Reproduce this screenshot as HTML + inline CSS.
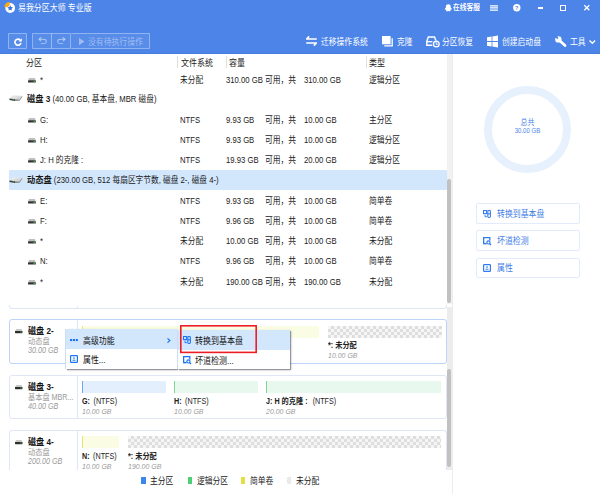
<!DOCTYPE html>
<html lang="zh-CN"><head><meta charset="utf-8"><title>易我分区大师 专业版</title>
<style>
html,body{margin:0;padding:0;}
body{width:600px;height:494px;position:relative;overflow:hidden;background:#fff;font-family:"Liberation Sans","Noto Sans CJK SC",sans-serif;}
.t{position:absolute;white-space:nowrap;line-height:12px;height:12px;transform-origin:0 50%;}
.b{position:absolute;box-sizing:border-box;}
.i{font-style:italic;}
.bd{font-weight:bold;}
svg{position:absolute;overflow:visible;}
.ck{background-color:#fff;background-color:#f6f6f6;background-image:linear-gradient(45deg,#dedede 25%,transparent 25%,transparent 75%,#dedede 75%),linear-gradient(45deg,#dedede 25%,transparent 25%,transparent 75%,#dedede 75%);background-size:6px 6px;background-position:0 0,3px 3px;}
</style></head><body>

<div class="b" style="left:0px;top:0px;width:600px;height:54px;background:#4c84e8;border-bottom:1px solid #457cde;"></div>
<svg style="left:4px;top:2px" width="12" height="12" viewBox="0 0 12 12"><circle cx="6.200" cy="6" r="4.900" fill="#fff"/><path d="M0.300 5A5.700 5.700 0 0 1 5.800 0.100L5.700 3.300L3.300 5.300Z" fill="#f7a81b"/><path d="M6.200 3.300l.85 1.750 1.950.25-1.400 1.350.35 1.900L6.200 7.650 4.450 8.550l.35-1.900L3.400 5.300l1.950-.25z" fill="#3b74dc"/></svg>
<div class="t " style="left:17.5px;top:2.2px;font-size:9.03px;color:#fff;transform:scaleX(0.88);">易我分区大师 专业版</div>
<svg style="left:444.300px;top:4px" width="8.600" height="7.500" viewBox="0 0 9 10" preserveAspectRatio="none"><path d="M4.500 0.300C2.900 0.300 2 1.500 2 3v1.600C1.300 5.500 0.600 6.600 0.800 7.600c.3.300.8-.3 1-.6.100.6.400 1 .8 1.400-.4.200-.7.400-.6.800.2.500 1.600.4 2.500.1.900.3 2.300.4 2.500-.1.100-.4-.2-.6-.6-.8.400-.4.700-.8.800-1.400.2.300.7.900 1 .6.200-1-.5-2.100-1.200-3V3c0-1.500-.9-2.700-2.500-2.700z" fill="#fff"/></svg>
<div class="t " style="left:453.2px;top:2.4px;font-size:7.67px;color:#fff;transform:scaleX(0.88);text-shadow:0 0 .4px #fff;">在线客服</div>
<svg style="left:490px;top:5px" width="8" height="6" viewBox="0 0 8 6"><path d="M0 .75h8M0 2.950h8M0 5.150h8" stroke="#fff" stroke-width="1.250"/></svg>
<svg style="left:513.300px;top:3.700px" width="7.600" height="7.600" viewBox="0 0 8 8"><circle cx="4" cy="4" r="3.900" fill="#fff"/><text x="4" y="6.100" font-size="5.800" font-weight="bold" text-anchor="middle" fill="#4c84e8" font-family="Liberation Sans,sans-serif">?</text></svg>
<div class="b" style="left:537.5px;top:7px;width:5.6px;height:1.7px;background:#fff;"></div>
<div class="b" style="left:560.4px;top:5px;width:5.9px;height:5.7px;border:1.600px solid #fff;"></div>
<svg style="left:583.700px;top:5px" width="5.600" height="5.600" viewBox="0 0 6 6"><path d="M.3 .3l5.400 5.400M5.700 .3L.3 5.700" stroke="#fff" stroke-width="1.400"/></svg>
<div class="b" style="left:8px;top:33px;width:19px;height:16px;border:1px solid rgba(255,255,255,.34);background:rgba(255,255,255,.07);border-radius:1px;"></div>
<svg style="left:13.800px;top:37.500px" width="8" height="8" viewBox="0 0 8 8"><path d="M6.300 2.300A3 3 0 1 0 6.900 4.800" fill="none" stroke="#fff" stroke-width="1.700"/><path d="M7.800 0.300v3.200H4.600z" fill="#fff"/></svg>
<div class="b" style="left:32px;top:33px;width:20px;height:16px;border:1px solid rgba(255,255,255,.34);border-right:none;background:rgba(255,255,255,.07);border-radius:1px;"></div>
<div class="b" style="left:51px;top:33px;width:20px;height:16px;border:1px solid rgba(255,255,255,.34);background:rgba(255,255,255,.07);border-radius:1px;"></div>
<div class="b" style="left:71px;top:33px;width:79px;height:16px;border:1px solid rgba(255,255,255,.34);border-left:none;background:rgba(255,255,255,.07);border-radius:1px;"></div>
<svg style="left:37.500px;top:37.300px" width="9" height="7" viewBox="0 0 9 7"><path d="M1.200 2.300h5a2.100 2.100 0 0 1 0 4.200H3" fill="none" stroke="rgba(255,255,255,.42)" stroke-width="1.200"/><path d="M3.200 .3L1 2.300l2.200 2" fill="none" stroke="rgba(255,255,255,.42)" stroke-width="1.200"/></svg>
<svg style="left:56.500px;top:37.300px" width="9" height="7" viewBox="0 0 9 7"><path d="M7.800 2.300h-5a2.100 2.100 0 0 0 0 4.200H6" fill="none" stroke="rgba(255,255,255,.42)" stroke-width="1.200"/><path d="M5.800 .3L8 2.300l-2.200 2" fill="none" stroke="rgba(255,255,255,.42)" stroke-width="1.200"/></svg>
<svg style="left:79px;top:37.700px" width="5.500" height="7.200" viewBox="0 0 5.500 7.200"><path d="M0 0l5.500 3.600-5.500 3.600z" fill="rgba(255,255,255,.42)"/></svg>
<div class="t " style="left:88px;top:35.5px;font-size:8.92px;color:rgba(255,255,255,.42);transform:scaleX(0.88);">没有待执行操作</div>
<svg style="left:306.300px;top:36.300px" width="11" height="10" viewBox="0 0 11 10"><path d="M0 3h10.800M3.200 .3L.5 3M.2 7h10.800M7.800 9.700L10.500 7" fill="none" stroke="#fff" stroke-width="1.650"/></svg>
<div class="t " style="left:321px;top:35.5px;font-size:8.86px;color:#fff;transform:scaleX(0.88);">迁移操作系统</div>
<svg style="left:382.300px;top:36.200px" width="11" height="10.500" viewBox="0 0 11 10.500"><path d="M0 0h8.600v8.300H0z" fill="#fff"/><path d="M10.200 2.300v7.500H2.300" fill="none" stroke="#fff" stroke-width="1.300"/></svg>
<div class="t " style="left:397px;top:35.5px;font-size:8.86px;color:#fff;transform:scaleX(0.88);">克隆</div>
<svg style="left:425.500px;top:36px" width="14" height="11.500" viewBox="0 0 14 11.500"><path d="M6.300 9.200H0.800V5.700L2.300 0.900H8.500L9.900 4.400" fill="none" stroke="#fff" stroke-width="1.450"/><path d="M.8 5.700h5.600" stroke="#fff" stroke-width="1.300"/><circle cx="10.300" cy="8.100" r="2.850" fill="none" stroke="#fff" stroke-width="1.300"/><path d="M10.200 6.500v1.800h1.500" fill="none" stroke="#fff" stroke-width="1"/></svg>
<div class="t " style="left:442px;top:35.5px;font-size:8.86px;color:#fff;transform:scaleX(0.88);">分区恢复</div>
<svg style="left:487px;top:36px" width="11" height="11" viewBox="0 0 11 11"><path d="M0 1.200L4.600.5v4.600H0zM5.400.4L11 -.4v5.500H5.400zM0 5.900h4.600v4.600L0 9.800zM5.400 5.900H11v5.500l-5.600-.8z" fill="#fff"/></svg>
<div class="t " style="left:502px;top:35.5px;font-size:8.86px;color:#fff;transform:scaleX(0.88);">创建启动盘</div>
<svg style="left:555px;top:36.200px" width="12" height="11" viewBox="0 0 12 11"><circle cx="3.400" cy="3.400" r="3.200" fill="#fff"/><path d="M3.400 3.400L-0.500 1.300L1.600 -0.800Z" fill="#4c84e8"/><path d="M2 2.100L0 0.100L1.500-.5L3.600 1.600Z" fill="#4c84e8"/><path d="M4.800 4.800L10 9.500" stroke="#fff" stroke-width="2.700" stroke-linecap="round"/></svg>
<div class="t " style="left:570px;top:35.5px;font-size:8.86px;color:#fff;transform:scaleX(0.88);">工具</div>
<svg style="left:589.200px;top:39.800px" width="6.600" height="4.200" viewBox="0 0 6.600 4.200"><path d="M.5.500L3.300 3.300l2.800-2.800" fill="none" stroke="#fff" stroke-width="1.400"/></svg>
<div class="t " style="left:26px;top:57.4px;font-size:9.09px;color:#222;transform:scaleX(0.88);">分区</div>
<div class="b" style="left:177px;top:56px;width:1px;height:12px;background:#e0e0e0;"></div>
<div class="b" style="left:226px;top:56px;width:1px;height:12px;background:#e0e0e0;"></div>
<div class="b" style="left:366px;top:56px;width:1px;height:12px;background:#e0e0e0;"></div>
<div class="t " style="left:180.5px;top:57.4px;font-size:9.09px;color:#222;transform:scaleX(0.88);">文件系统</div>
<div class="t " style="left:229px;top:57.4px;font-size:9.09px;color:#222;transform:scaleX(0.88);">容量</div>
<div class="t " style="left:369px;top:57.4px;font-size:9.09px;color:#222;transform:scaleX(0.88);">类型</div>
<div class="b" style="left:9px;top:170px;width:438px;height:20px;background:#d2e6fc;"></div>
<svg style="left:28px;top:77.9px" width="7.800" height="4.700" viewBox="0 0 8 5" preserveAspectRatio="none"><path d="M1 0h6L8 2.600H0z" fill="#bebebe"/><rect x="0" y="2.500" width="8" height="2.400" rx=".5" fill="#333"/><rect x="5.700" y="3.100" width="1.400" height="1" fill="#3fd04f"/></svg>
<div class="t " style="left:40px;top:73.5px;font-size:8.75px;color:#1a1a1a;transform:scaleX(0.88);">*</div>
<div class="t " style="left:179.5px;top:73.5px;font-size:8.75px;color:#1a1a1a;transform:scaleX(0.88);">未分配</div>
<div class="t " style="left:226px;top:73.5px;font-size:8.75px;color:#1a1a1a;transform:scaleX(0.88);">310.00 GB</div>
<div class="t " style="left:265px;top:73.5px;font-size:8.86px;color:#1a1a1a;transform:scaleX(0.88);">可用，共</div>
<div class="t " style="left:303.5px;top:73.5px;font-size:8.75px;color:#1a1a1a;transform:scaleX(0.88);">310.00 GB</div>
<div class="t " style="left:369px;top:73.5px;font-size:8.86px;color:#1a1a1a;transform:scaleX(0.88);">逻辑分区</div>
<svg style="left:28px;top:118.10000000000001px" width="7.800" height="4.700" viewBox="0 0 8 5" preserveAspectRatio="none"><path d="M1 0h6L8 2.600H0z" fill="#bebebe"/><rect x="0" y="2.500" width="8" height="2.400" rx=".5" fill="#333"/><rect x="5.700" y="3.100" width="1.400" height="1" fill="#3fd04f"/></svg>
<div class="t " style="left:40px;top:113.7px;font-size:8.75px;color:#1a1a1a;transform:scaleX(0.88);">G:</div>
<div class="t " style="left:179.5px;top:113.7px;font-size:8.75px;color:#1a1a1a;transform:scaleX(0.88);">NTFS</div>
<div class="t " style="left:226px;top:113.7px;font-size:8.75px;color:#1a1a1a;transform:scaleX(0.88);">9.93 GB</div>
<div class="t " style="left:265px;top:113.7px;font-size:8.86px;color:#1a1a1a;transform:scaleX(0.88);">可用，共</div>
<div class="t " style="left:303.5px;top:113.7px;font-size:8.75px;color:#1a1a1a;transform:scaleX(0.88);">10.00 GB</div>
<div class="t " style="left:369px;top:113.7px;font-size:8.86px;color:#1a1a1a;transform:scaleX(0.88);">主分区</div>
<svg style="left:28px;top:138.20000000000002px" width="7.800" height="4.700" viewBox="0 0 8 5" preserveAspectRatio="none"><path d="M1 0h6L8 2.600H0z" fill="#bebebe"/><rect x="0" y="2.500" width="8" height="2.400" rx=".5" fill="#333"/><rect x="5.700" y="3.100" width="1.400" height="1" fill="#3fd04f"/></svg>
<div class="t " style="left:40px;top:133.8px;font-size:8.75px;color:#1a1a1a;transform:scaleX(0.88);">H:</div>
<div class="t " style="left:179.5px;top:133.8px;font-size:8.75px;color:#1a1a1a;transform:scaleX(0.88);">NTFS</div>
<div class="t " style="left:226px;top:133.8px;font-size:8.75px;color:#1a1a1a;transform:scaleX(0.88);">9.93 GB</div>
<div class="t " style="left:265px;top:133.8px;font-size:8.86px;color:#1a1a1a;transform:scaleX(0.88);">可用，共</div>
<div class="t " style="left:303.5px;top:133.8px;font-size:8.75px;color:#1a1a1a;transform:scaleX(0.88);">10.00 GB</div>
<div class="t " style="left:369px;top:133.8px;font-size:8.86px;color:#1a1a1a;transform:scaleX(0.88);">逻辑分区</div>
<svg style="left:28px;top:158.4px" width="7.800" height="4.700" viewBox="0 0 8 5" preserveAspectRatio="none"><path d="M1 0h6L8 2.600H0z" fill="#bebebe"/><rect x="0" y="2.500" width="8" height="2.400" rx=".5" fill="#333"/><rect x="5.700" y="3.100" width="1.400" height="1" fill="#3fd04f"/></svg>
<div class="t " style="left:40px;top:154.0px;font-size:8.75px;color:#1a1a1a;transform:scaleX(0.88);">J: H 的克隆 :</div>
<div class="t " style="left:179.5px;top:154.0px;font-size:8.75px;color:#1a1a1a;transform:scaleX(0.88);">NTFS</div>
<div class="t " style="left:226px;top:154.0px;font-size:8.75px;color:#1a1a1a;transform:scaleX(0.88);">19.93 GB</div>
<div class="t " style="left:265px;top:154.0px;font-size:8.86px;color:#1a1a1a;transform:scaleX(0.88);">可用，共</div>
<div class="t " style="left:303.5px;top:154.0px;font-size:8.75px;color:#1a1a1a;transform:scaleX(0.88);">20.00 GB</div>
<div class="t " style="left:369px;top:154.0px;font-size:8.86px;color:#1a1a1a;transform:scaleX(0.88);">逻辑分区</div>
<svg style="left:28px;top:198.9px" width="7.800" height="4.700" viewBox="0 0 8 5" preserveAspectRatio="none"><path d="M1 0h6L8 2.600H0z" fill="#bebebe"/><rect x="0" y="2.500" width="8" height="2.400" rx=".5" fill="#333"/><rect x="5.700" y="3.100" width="1.400" height="1" fill="#3fd04f"/></svg>
<div class="t " style="left:40px;top:194.5px;font-size:8.75px;color:#1a1a1a;transform:scaleX(0.88);">E:</div>
<div class="t " style="left:179.5px;top:194.5px;font-size:8.75px;color:#1a1a1a;transform:scaleX(0.88);">NTFS</div>
<div class="t " style="left:226px;top:194.5px;font-size:8.75px;color:#1a1a1a;transform:scaleX(0.88);">9.93 GB</div>
<div class="t " style="left:265px;top:194.5px;font-size:8.86px;color:#1a1a1a;transform:scaleX(0.88);">可用，共</div>
<div class="t " style="left:303.5px;top:194.5px;font-size:8.75px;color:#1a1a1a;transform:scaleX(0.88);">10.00 GB</div>
<div class="t " style="left:369px;top:194.5px;font-size:8.86px;color:#1a1a1a;transform:scaleX(0.88);">简单卷</div>
<svg style="left:28px;top:219.1px" width="7.800" height="4.700" viewBox="0 0 8 5" preserveAspectRatio="none"><path d="M1 0h6L8 2.600H0z" fill="#bebebe"/><rect x="0" y="2.500" width="8" height="2.400" rx=".5" fill="#333"/><rect x="5.700" y="3.100" width="1.400" height="1" fill="#3fd04f"/></svg>
<div class="t " style="left:40px;top:214.7px;font-size:8.75px;color:#1a1a1a;transform:scaleX(0.88);">F:</div>
<div class="t " style="left:179.5px;top:214.7px;font-size:8.75px;color:#1a1a1a;transform:scaleX(0.88);">NTFS</div>
<div class="t " style="left:226px;top:214.7px;font-size:8.75px;color:#1a1a1a;transform:scaleX(0.88);">9.96 GB</div>
<div class="t " style="left:265px;top:214.7px;font-size:8.86px;color:#1a1a1a;transform:scaleX(0.88);">可用，共</div>
<div class="t " style="left:303.5px;top:214.7px;font-size:8.75px;color:#1a1a1a;transform:scaleX(0.88);">10.00 GB</div>
<div class="t " style="left:369px;top:214.7px;font-size:8.86px;color:#1a1a1a;transform:scaleX(0.88);">简单卷</div>
<svg style="left:28px;top:239.4px" width="7.800" height="4.700" viewBox="0 0 8 5" preserveAspectRatio="none"><path d="M1 0h6L8 2.600H0z" fill="#bebebe"/><rect x="0" y="2.500" width="8" height="2.400" rx=".5" fill="#333"/><rect x="5.700" y="3.100" width="1.400" height="1" fill="#3fd04f"/></svg>
<div class="t " style="left:40px;top:235.0px;font-size:8.75px;color:#1a1a1a;transform:scaleX(0.88);">*</div>
<div class="t " style="left:179.5px;top:235.0px;font-size:8.75px;color:#1a1a1a;transform:scaleX(0.88);">未分配</div>
<div class="t " style="left:226px;top:235.0px;font-size:8.75px;color:#1a1a1a;transform:scaleX(0.88);">10.00 GB</div>
<div class="t " style="left:265px;top:235.0px;font-size:8.86px;color:#1a1a1a;transform:scaleX(0.88);">可用，共</div>
<div class="t " style="left:303.5px;top:235.0px;font-size:8.75px;color:#1a1a1a;transform:scaleX(0.88);">10.00 GB</div>
<div class="t " style="left:369px;top:235.0px;font-size:8.86px;color:#1a1a1a;transform:scaleX(0.88);">未分配</div>
<svg style="left:28px;top:259.59999999999997px" width="7.800" height="4.700" viewBox="0 0 8 5" preserveAspectRatio="none"><path d="M1 0h6L8 2.600H0z" fill="#bebebe"/><rect x="0" y="2.500" width="8" height="2.400" rx=".5" fill="#333"/><rect x="5.700" y="3.100" width="1.400" height="1" fill="#3fd04f"/></svg>
<div class="t " style="left:40px;top:255.2px;font-size:8.75px;color:#1a1a1a;transform:scaleX(0.88);">N:</div>
<div class="t " style="left:179.5px;top:255.2px;font-size:8.75px;color:#1a1a1a;transform:scaleX(0.88);">NTFS</div>
<div class="t " style="left:226px;top:255.2px;font-size:8.75px;color:#1a1a1a;transform:scaleX(0.88);">9.96 GB</div>
<div class="t " style="left:265px;top:255.2px;font-size:8.86px;color:#1a1a1a;transform:scaleX(0.88);">可用，共</div>
<div class="t " style="left:303.5px;top:255.2px;font-size:8.75px;color:#1a1a1a;transform:scaleX(0.88);">10.00 GB</div>
<div class="t " style="left:369px;top:255.2px;font-size:8.86px;color:#1a1a1a;transform:scaleX(0.88);">简单卷</div>
<svg style="left:28px;top:279.9px" width="7.800" height="4.700" viewBox="0 0 8 5" preserveAspectRatio="none"><path d="M1 0h6L8 2.600H0z" fill="#bebebe"/><rect x="0" y="2.500" width="8" height="2.400" rx=".5" fill="#333"/><rect x="5.700" y="3.100" width="1.400" height="1" fill="#3fd04f"/></svg>
<div class="t " style="left:40px;top:275.5px;font-size:8.75px;color:#1a1a1a;transform:scaleX(0.88);">*</div>
<div class="t " style="left:179.5px;top:275.5px;font-size:8.75px;color:#1a1a1a;transform:scaleX(0.88);">未分配</div>
<div class="t " style="left:226px;top:275.5px;font-size:8.75px;color:#1a1a1a;transform:scaleX(0.88);">190.00 GB</div>
<div class="t " style="left:265px;top:275.5px;font-size:8.86px;color:#1a1a1a;transform:scaleX(0.88);">可用，共</div>
<div class="t " style="left:303.5px;top:275.5px;font-size:8.75px;color:#1a1a1a;transform:scaleX(0.88);">190.00 GB</div>
<div class="t " style="left:369px;top:275.5px;font-size:8.86px;color:#1a1a1a;transform:scaleX(0.88);">未分配</div>
<svg style="left:9px;top:95.2px" width="14" height="7" viewBox="0 0 14 7"><defs><linearGradient id="dg98" x1="0" y1="0" x2="1" y2="1"><stop offset="0" stop-color="#f4f4f4"/><stop offset="1" stop-color="#c9c9c9"/></linearGradient></defs><path d="M3.500 0.300L13.200 0.800L10.500 4.500L0.500 3.600z" fill="url(#dg98)"/><path d="M0.500 3.600L6 4.300V6L0.500 4.900z" fill="#3a3a3a"/><path d="M6 4.300L10.500 4.500L13.200 0.800V2L10.600 5.800L6 6z" fill="#8a8a8a"/><rect x="3.600" y="4.500" width="1.400" height=".7" fill="#3fd04f"/></svg>
<div class="t " style="left:26.5px;top:92.5px;font-size:8.75px;color:#1a1a1a;transform:scaleX(0.88);"><b style="font-size:107%">磁盘 3</b> (40.00 GB, 基本盘, MBR 磁盘)</div>
<svg style="left:9px;top:176.5px" width="14" height="7" viewBox="0 0 14 7"><defs><linearGradient id="dg180" x1="0" y1="0" x2="1" y2="1"><stop offset="0" stop-color="#f4f4f4"/><stop offset="1" stop-color="#c9c9c9"/></linearGradient></defs><path d="M3.500 0.300L13.200 0.800L10.500 4.500L0.500 3.600z" fill="url(#dg180)"/><path d="M0.500 3.600L6 4.300V6L0.500 4.900z" fill="#3a3a3a"/><path d="M6 4.300L10.500 4.500L13.200 0.800V2L10.600 5.800L6 6z" fill="#8a8a8a"/><rect x="3.600" y="4.500" width="1.400" height=".7" fill="#3fd04f"/></svg>
<div class="t " style="left:26.5px;top:173.5px;font-size:8.75px;color:#1a1a1a;transform:scaleX(0.88);"><b style="font-size:107%">动态盘</b> (230.00 GB, 512 每扇区字节数, 磁盘 2-, 磁盘 4-)</div>
<div class="b" style="left:447px;top:54px;width:5.5px;height:250px;background:#f1f1f1;"></div>
<div class="b" style="left:447px;top:307px;width:5.5px;height:163px;background:#ececec;"></div>
<div class="b" style="left:447.2px;top:178.5px;width:4.3px;height:124px;background:#c1c1c1;border-radius:2.200px;"></div>
<div class="b" style="left:447.2px;top:369px;width:4.3px;height:98.2px;background:#c1c1c1;border-radius:2.200px;"></div>
<div class="b" style="left:452px;top:54px;width:1px;height:440px;background:#ededed;"></div>
<div class="b" style="left:9px;top:305px;width:437.5px;height:3.7px;border:1px solid #dfe7f5;border-top:none;border-radius:0 0 3px 3px;"></div>
<div class="b" style="left:77px;top:306px;width:1px;height:2px;background:#dfe7f5;"></div>
<div class="b" style="left:9px;top:319px;width:437.5px;height:45px;border:1px solid #bcd4f8;border-radius:3px;background:#fff;"></div>
<div class="b" style="left:77px;top:320px;width:1px;height:43px;background:#dfe7f5;"></div>
<svg style="left:14.5px;top:329.1px" width="7.500" height="4.400" viewBox="0 0 8 5" preserveAspectRatio="none"><path d="M1.100 0h5.800L8 2.500H0z" fill="#c9c9c9"/><rect x="0" y="2.200" width="8" height="2.600" rx=".5" fill="#2e2e2e"/><rect x="5.700" y="3" width="1.400" height="1" fill="#3fd04f"/></svg>
<div class="t " style="left:28px;top:324.5px;font-size:9.2px;color:#111;transform:scaleX(0.88);font-weight:bold;">磁盘 2-</div>
<div class="t " style="left:28px;top:335.5px;font-size:8.18px;color:#9a9a9a;transform:scaleX(0.88);">动态盘</div>
<div class="t " style="left:28px;top:344.8px;font-size:8.18px;color:#9a9a9a;transform:scaleX(0.88);font-style:italic;">30.00 GB</div>
<div class="b" style="left:82px;top:326px;width:237.3px;height:12px;background:#fbfce4;border-left:1px solid #e6e76a;"></div>
<div class="b ck" style="left:328px;top:326px;width:113.5px;height:12px;"></div>
<div class="t " style="left:328px;top:340.0px;font-size:8.18px;color:#222;transform:scaleX(0.88);"><b>*: 未分配</b></div>
<div class="t " style="left:328px;top:350.0px;font-size:7.95px;color:#9a9a9a;transform:scaleX(0.88);font-style:italic;">10.00 GB</div>
<div class="b" style="left:9px;top:375px;width:437.5px;height:44px;border:1px solid #dfe7f5;border-radius:3px;background:#fff;"></div>
<div class="b" style="left:77px;top:376px;width:1px;height:42px;background:#dfe7f5;"></div>
<svg style="left:14.5px;top:385.1px" width="7.500" height="4.400" viewBox="0 0 8 5" preserveAspectRatio="none"><path d="M1.100 0h5.800L8 2.500H0z" fill="#c9c9c9"/><rect x="0" y="2.200" width="8" height="2.600" rx=".5" fill="#2e2e2e"/><rect x="5.700" y="3" width="1.400" height="1" fill="#3fd04f"/></svg>
<div class="t " style="left:28px;top:380.5px;font-size:9.2px;color:#111;transform:scaleX(0.88);font-weight:bold;">磁盘 3-</div>
<div class="t " style="left:28px;top:391.5px;font-size:8.18px;color:#9a9a9a;transform:scaleX(0.88);">基本盘 MBR...</div>
<div class="t " style="left:28px;top:400.8px;font-size:8.18px;color:#9a9a9a;transform:scaleX(0.88);font-style:italic;">40.00 GB</div>
<div class="b" style="left:82px;top:381px;width:83.5px;height:12px;background:#e4effd;border-left:1px solid #6ea6f3;"></div>
<div class="t " style="left:82px;top:396.0px;font-size:8.18px;color:#222;transform:scaleX(0.88);"><b>G:</b> <span style="margin-left:1.700px">(NTFS)</span></div>
<div class="t " style="left:82px;top:406.0px;font-size:7.95px;color:#9a9a9a;transform:scaleX(0.88);font-style:italic;">10.00 GB</div>
<div class="b" style="left:174px;top:381px;width:84px;height:12px;background:#e9f8ee;border-left:1px solid #7fd79a;"></div>
<div class="t " style="left:174px;top:396.0px;font-size:8.18px;color:#222;transform:scaleX(0.88);"><b>H:</b> <span style="margin-left:1.700px">(NTFS)</span></div>
<div class="t " style="left:174px;top:406.0px;font-size:7.95px;color:#9a9a9a;transform:scaleX(0.88);font-style:italic;">10.00 GB</div>
<div class="b" style="left:266px;top:381px;width:175px;height:12px;background:#e9f8ee;border-left:1px solid #7fd79a;"></div>
<div class="t " style="left:266px;top:396.0px;font-size:8.18px;color:#222;transform:scaleX(0.88);"><b>J: H 的克隆 :</b> <span style="margin-left:3.500px">(NTFS)</span></div>
<div class="t " style="left:266px;top:406.0px;font-size:7.95px;color:#9a9a9a;transform:scaleX(0.88);font-style:italic;">20.00 GB</div>
<div class="b" style="left:9px;top:430px;width:437.5px;height:41px;border:1px solid #dfe7f5;border-radius:3px;background:#fff;border-bottom:none;border-radius:3px 3px 0 0;"></div>
<div class="b" style="left:77px;top:431px;width:1px;height:40px;background:#dfe7f5;"></div>
<svg style="left:14.5px;top:440.1px" width="7.500" height="4.400" viewBox="0 0 8 5" preserveAspectRatio="none"><path d="M1.100 0h5.800L8 2.500H0z" fill="#c9c9c9"/><rect x="0" y="2.200" width="8" height="2.600" rx=".5" fill="#2e2e2e"/><rect x="5.700" y="3" width="1.400" height="1" fill="#3fd04f"/></svg>
<div class="t " style="left:28px;top:435.5px;font-size:9.2px;color:#111;transform:scaleX(0.88);font-weight:bold;">磁盘 4-</div>
<div class="t " style="left:28px;top:446.5px;font-size:8.18px;color:#9a9a9a;transform:scaleX(0.88);">动态盘</div>
<div class="t " style="left:28px;top:455.8px;font-size:8.18px;color:#9a9a9a;transform:scaleX(0.88);font-style:italic;">200.00 GB</div>
<div class="b" style="left:82px;top:436px;width:37px;height:12px;background:#fbfce4;border-left:1px solid #e6e76a;"></div>
<div class="t " style="left:82px;top:451.0px;font-size:8.18px;color:#222;transform:scaleX(0.88);"><b>N:</b> <span style="margin-left:1.700px">(NTFS)</span></div>
<div class="t " style="left:82px;top:461.0px;font-size:7.95px;color:#9a9a9a;transform:scaleX(0.88);font-style:italic;">10.00 GB</div>
<div class="b ck" style="left:128px;top:436px;width:313px;height:12px;"></div>
<div class="t " style="left:128px;top:451.0px;font-size:8.18px;color:#222;transform:scaleX(0.88);"><b>*: 未分配</b></div>
<div class="t " style="left:128px;top:461.0px;font-size:7.95px;color:#9a9a9a;transform:scaleX(0.88);font-style:italic;">190.00 GB</div>
<div class="b" style="left:0px;top:470px;width:447px;height:24px;background:#fff;"></div>
<div class="b" style="left:141px;top:477px;width:4.5px;height:6.5px;background:#3b87f0;"></div>
<div class="t " style="left:150px;top:474.5px;font-size:8.86px;color:#222;transform:scaleX(0.88);">主分区</div>
<div class="b" style="left:187.5px;top:477px;width:4.5px;height:6.5px;background:#4fcf73;"></div>
<div class="t " style="left:196.5px;top:474.5px;font-size:8.86px;color:#222;transform:scaleX(0.88);">逻辑分区</div>
<div class="b" style="left:240.5px;top:477px;width:4.5px;height:6.5px;background:#e3e040;"></div>
<div class="t " style="left:249.5px;top:474.5px;font-size:8.86px;color:#222;transform:scaleX(0.88);">简单卷</div>
<div class="b ck" style="left:286.500px;top:477px;width:4.500px;height:6.500px;background-size:2px 2px;background-position:0 0,1px 1px;"></div>
<div class="t " style="left:295.5px;top:474.5px;font-size:8.86px;color:#222;transform:scaleX(0.88);">未分配</div>
<svg style="left:484px;top:86px" width="87" height="87" viewBox="0 0 87 87"><circle cx="43.5" cy="43.5" r="39.5" fill="none" stroke="#e7f1fd" stroke-width="8"/></svg>
<div class="t" style="left:484px;top:116.600px;width:87px;text-align:center;font-size:7.900px;color:#4a86e8;transform-origin:50% 50%;transform:scaleX(.88);">总共</div>
<div class="t" style="left:484px;top:124.8px;width:87px;text-align:center;font-size:6.9px;color:#4a86e8;transform-origin:50% 50%;transform:scaleX(.88);">30.00 GB</div>
<div class="b" style="left:475.5px;top:203px;width:104.5px;height:21px;border:1px solid #e2ebfb;border-radius:2px;"></div>
<svg style="left:483.1px;top:209.7px" width="8" height="8" viewBox="0 0 7.500 7.500"><rect x=".5" y=".5" width="2.9" height="2.9" fill="none" stroke="#2f7bee" stroke-width="1"/><rect x="4.5" y=".5" width="2.4" height="6.5" rx=".9" fill="none" stroke="#2f7bee" stroke-width="1"/><path d="M4.5 3.6h2.400" stroke="#2f7bee" stroke-width="1"/><path d="M1.9 4.400v1.900h1.700" fill="none" stroke="#2f7bee" stroke-width=".9"/></svg>
<div class="t " style="left:497px;top:207.8px;font-size:8.98px;color:#3f7fe6;transform:scaleX(0.88);">转换到基本盘</div>
<div class="b" style="left:475.5px;top:230px;width:104.5px;height:21px;border:1px solid #e2ebfb;border-radius:2px;"></div>
<svg style="left:483.1px;top:236.7px" width="8" height="8" viewBox="0 0 7.500 7.500"><path d="M.6 5.800V.6h5.800v2.600" fill="none" stroke="#2f7bee" stroke-width="1.200"/><path d="M.1 6.200h3.300" stroke="#2f7bee" stroke-width="1.400"/><circle cx="5.100" cy="5.100" r="1.500" fill="none" stroke="#2f7bee" stroke-width="1.050"/><path d="M6.100 6.100l1.400 1.400" stroke="#2f7bee" stroke-width="1.150"/></svg>
<div class="t " style="left:497px;top:234.8px;font-size:8.98px;color:#3f7fe6;transform:scaleX(0.88);">坏道检测</div>
<div class="b" style="left:475.5px;top:257.5px;width:104.5px;height:20.5px;border:1px solid #e2ebfb;border-radius:2px;"></div>
<svg style="left:483.1px;top:264.2px" width="8" height="8" viewBox="0 0 7.500 7.500"><rect x=".55" y=".55" width="6.400" height="6.400" rx=".7" fill="none" stroke="#2f7bee" stroke-width="1.100"/><path d="M2.300 4.900h2.900" stroke="#2f7bee" stroke-width=".9"/><circle cx="3.750" cy="2.800" r=".8" fill="#2f7bee"/></svg>
<div class="t " style="left:497px;top:262.3px;font-size:8.98px;color:#3f7fe6;transform:scaleX(0.88);">属性</div>
<div class="b" style="left:65.5px;top:329px;width:111.5px;height:39.5px;background:#fff;box-shadow:1px 1px 0 rgba(95,105,125,.5),1px 1px 2px rgba(0,0,0,.35),-1px 0 0 #d3e2f9;"></div>
<div class="b" style="left:65.5px;top:329px;width:111.5px;height:20.3px;background:#d2e6fc;"></div>
<svg style="left:70px;top:338.600px" width="8" height="2.100" viewBox="0 0 8 2.100"><rect x="0" y="0" width="2.100" height="2.100" fill="#1a73f0"/><rect x="2.900" y="0" width="2.100" height="2.100" fill="#1a73f0"/><rect x="5.800" y="0" width="2.100" height="2.100" fill="#1a73f0"/></svg>
<div class="t " style="left:83px;top:334.5px;font-size:8.98px;color:#111;transform:scaleX(0.88);">高级功能</div>
<svg style="left:167.200px;top:337.500px" width="3.500" height="5" viewBox="0 0 3.500 5"><path d="M.5.400L2.900 2.500.5 4.600" fill="none" stroke="#1a73f0" stroke-width="1.100"/></svg>
<svg style="left:70px;top:355px" width="8" height="8" viewBox="0 0 7.500 7.500"><rect x=".55" y=".55" width="6.400" height="6.400" rx=".7" fill="none" stroke="#1a73f0" stroke-width="1.100"/><path d="M2.300 4.900h2.900" stroke="#1a73f0" stroke-width=".9"/><circle cx="3.750" cy="2.800" r=".8" fill="#1a73f0"/></svg>
<div class="t " style="left:83px;top:354.0px;font-size:8.98px;color:#111;transform:scaleX(0.88);">属性...</div>
<div class="b" style="left:178px;top:330px;width:111.8px;height:38.6px;background:#fff;box-shadow:1px 1px 0 rgba(95,105,125,.5),1px 1px 2px rgba(0,0,0,.35),-1px 0 0 #d3e2f9;"></div>
<div class="b" style="left:178px;top:330px;width:111.8px;height:20px;background:#d2e6fc;"></div>
<svg style="left:183.1px;top:336px" width="8" height="8" viewBox="0 0 7.500 7.500"><rect x=".5" y=".5" width="2.9" height="2.9" fill="none" stroke="#1a73f0" stroke-width="1"/><rect x="4.5" y=".5" width="2.4" height="6.5" rx=".9" fill="none" stroke="#1a73f0" stroke-width="1"/><path d="M4.5 3.6h2.400" stroke="#1a73f0" stroke-width="1"/><path d="M1.9 4.400v1.900h1.700" fill="none" stroke="#1a73f0" stroke-width=".9"/></svg>
<div class="t " style="left:195px;top:334.5px;font-size:9.09px;color:#111;transform:scaleX(0.88);">转换到基本盘</div>
<svg style="left:183.1px;top:355.8px" width="8" height="8" viewBox="0 0 7.500 7.500"><path d="M.6 5.800V.6h5.800v2.600" fill="none" stroke="#1a73f0" stroke-width="1.200"/><path d="M.1 6.200h3.300" stroke="#1a73f0" stroke-width="1.400"/><circle cx="5.100" cy="5.100" r="1.500" fill="none" stroke="#1a73f0" stroke-width="1.050"/><path d="M6.100 6.100l1.400 1.400" stroke="#1a73f0" stroke-width="1.150"/></svg>
<div class="t " style="left:195px;top:354.6px;font-size:9.09px;color:#111;transform:scaleX(0.88);">坏道检测...</div>
<svg style="left:180.200px;top:324.800px" width="77" height="28.200" viewBox="0 0 77 28.200"><rect x=".8" y=".8" width="75.400" height="26.600" fill="none" stroke="#ee1c25" stroke-width="1.600"/></svg>
</body></html>
